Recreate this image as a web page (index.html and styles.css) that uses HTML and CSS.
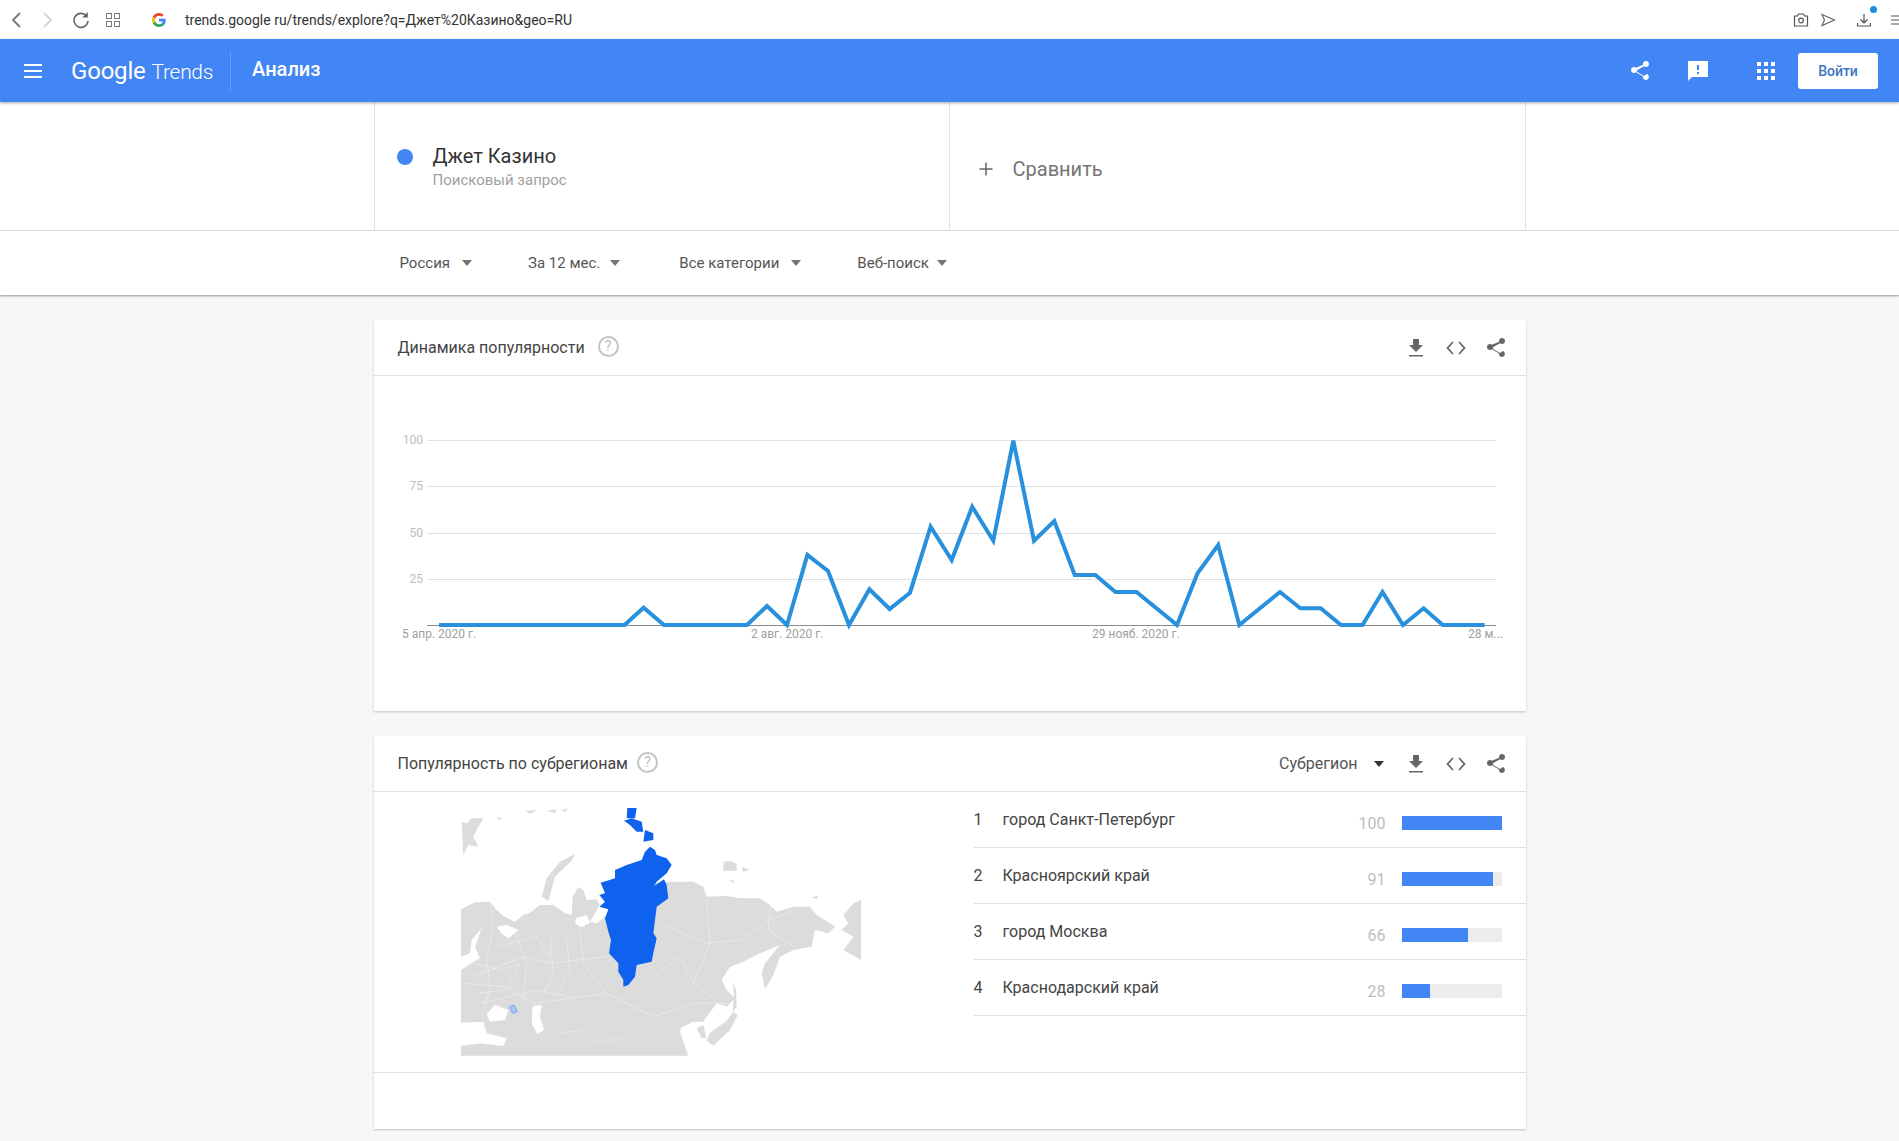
FILE: index.html
```html
<!DOCTYPE html>
<html lang="ru">
<head>
<meta charset="UTF-8">
<title>Google Trends - Анализ</title>
<link rel="stylesheet" href="styles.css">
</head>
<body>

<svg class="icon-defs" width="0" height="0">
    <symbol id="i-share" viewBox="0 0 24 24">
        <path d="M18 16.1c-.8 0-1.4.3-2 .8l-7.100-4.200c.1-.2.1-.5.100-.7s0-.5-.1-.7L16 7.200c.5.500 1.200.8 2 .8 1.700 0 3-1.300 3-3s-1.300-3-3-3-3 1.300-3 3c0 .2 0 .5.100.7L8 8.800C7.500 8.300 6.800 8 6 8c-1.700 0-3 1.300-3 3s1.300 3 3 3c.8 0 1.500-.3 2-.8l7.100 4.200c-.1.200-.1.400-.1.600 0 1.600 1.300 2.900 2.900 2.900s3-1.300 3-2.900-1.300-2.900-2.900-2.900z"/>
    </symbol>
    <symbol id="i-download" viewBox="0 0 24 24">
        <path d="M15 9V3H9v6H5l7 7 7-7zM5 19v1.500h14V19z"/>
    </symbol>
    <symbol id="i-code" viewBox="0 0 24 24">
        <path d="M9 6 3.500 12 9 18M15 6l5.500 6L15 18" fill="none" stroke="currentColor" stroke-width="1.800"/>
    </symbol>
</svg>

<!-- browser toolbar -->
<div class="browser-bar">
    <svg class="nav-icon" width="16" height="20" viewBox="0 0 16 20"><path d="M12 3 5 10l7 7" fill="none" stroke="#777" stroke-width="1.800"/></svg>
    <svg class="nav-icon nav-forward" width="16" height="20" viewBox="0 0 16 20"><path d="m5 3 7 7-7 7" fill="none" stroke="#d4d4d4" stroke-width="1.800"/></svg>
    <svg class="nav-icon nav-reload" width="18" height="18" viewBox="0 0 18 18"><path d="M14.500 5A7 7 0 1 0 16 10" fill="none" stroke="#666" stroke-width="1.600"/><path d="M15.800 1v5.500h-5.500z" fill="#666"/></svg>
    <svg class="nav-icon nav-grid" width="14" height="14" viewBox="0 0 14 14" fill="none" stroke="#777"><rect x=".5" y=".5" width="5" height="5"/><rect x="8.500" y=".5" width="5" height="5"/><rect x=".5" y="8.500" width="5" height="5"/><rect x="8.500" y="8.500" width="5" height="5"/></svg>
    <svg class="nav-favicon" width="14" height="14" viewBox="0 0 48 48">
        <path fill="#ea4335" d="M24 9.500c3.500 0 6.700 1.200 9.200 3.600l6.900-6.900C35.900 2.400 30.500 0 24 0 14.600 0 6.500 5.400 2.600 13.200l8 6.200C12.500 13.700 17.800 9.500 24 9.500z"/>
        <path fill="#4285f4" d="M47 24.500c0-1.600-.1-3.100-.4-4.500H24v9h12.900c-.6 3-2.200 5.500-4.700 7.200l7.700 6c4.500-4.200 7.100-10.300 7.100-17.700z"/>
        <path fill="#fbbc05" d="M10.600 28.600A14.500 14.500 0 0 1 10.600 19.400l-8-6.200A24 24 0 0 0 2.600 34.800z"/>
        <path fill="#34a853" d="M24 48c6.500 0 11.900-2.100 15.900-5.800l-7.700-6c-2.200 1.500-4.900 2.300-8.200 2.300-6.200 0-11.500-4.200-13.400-9.900l-8 6.200C6.500 42.600 14.600 48 24 48z"/>
    </svg>
    <span class="url">trends.google ru/trends/explore?q=Джет%20Казино&amp;geo=RU</span>
    <div class="browser-tools">
        <svg width="16" height="16" viewBox="0 0 16 16" fill="none" stroke="#555" stroke-width="1.200"><path d="M1.500 4h3l1-2h5l1 2h3v10h-13z"/><circle cx="8" cy="8.500" r="2.300"/></svg>
        <svg class="tool-send" width="16" height="16" viewBox="0 0 16 16" fill="none" stroke="#666" stroke-width="1.200"><path d="M2 2.500 14.500 8 2 13.500 4.500 8z"/></svg>
        <div class="tool-download">
            <svg width="16" height="16" viewBox="0 0 16 16" fill="none" stroke="#555" stroke-width="1.200"><path d="M8 2v9M4.500 7.500 8 11l3.500-3.500M1.500 11v3h13v-3"/></svg>
            <span class="tool-badge"></span>
        </div>
        <svg class="tool-menu" width="12" height="14" viewBox="0 0 12 14" stroke="#555" stroke-width="1.200"><path d="M0 3h12M0 7h12M0 11h12"/></svg>
    </div>
</div>

<header class="app-header">
    <svg class="menu-icon" width="18" height="14" viewBox="0 0 18 14" fill="#fff"><path d="M0 0h18v2H0zM0 6h18v2H0zM0 12h18v2H0z"/></svg>
    <div class="logo"><span class="logo-google">Google</span> <span class="logo-trends">Trends</span></div>
    <div class="header-title">Анализ</div>
    <div class="header-actions">
        <svg class="head-share" width="24" height="24"><use href="#i-share"/></svg>
        <svg class="head-feedback" width="24" height="24" viewBox="0 0 24 24"><path d="M22 2H2v20l4-4h16zM13 11h-2V6h2zm0 4h-2v-2h2z" fill-rule="evenodd"/></svg>
        <svg class="head-apps" width="18" height="18" viewBox="0 0 18 18"><path d="M0 0h4v4H0zM7 0h4v4H7zM14 0h4v4h-4zM0 7h4v4H0zM7 7h4v4H7zM14 7h4v4h-4zM0 14h4v4H0zM7 14h4v4H7zM14 14h4v4h-4z"/></svg>
        <button class="login-btn">Войти</button>
    </div>
</header>

<div class="search-row">
    <div class="search-inner">
        <div class="search-cell term">
            <span class="term-dot"></span>
            <div>
                <div class="term-name">Джет Казино</div>
                <div class="term-type">Поисковый запрос</div>
            </div>
        </div>
        <div class="search-cell compare">
            <svg width="16" height="16" viewBox="0 0 16 16" stroke="#666" stroke-width="1.500"><path d="M8 1.500v13M1.500 8h13"/></svg>
            <span>Сравнить</span>
        </div>
    </div>
</div>

<div class="filter-row">
    <div class="filter-inner">
        <div class="filter f-geo">Россия<span class="caret"></span></div>
        <div class="filter f-time">За 12 мес.<span class="caret"></span></div>
        <div class="filter f-cat">Все категории<span class="caret"></span></div>
        <div class="filter f-type">Веб-поиск<span class="caret"></span></div>
    </div>
</div>

<main class="page">
    <section class="card card-chart">
        <div class="card-head">
            <h2>Динамика популярности</h2>
            <span class="help">?</span>
            <div class="card-tools">
                <svg width="24" height="24"><use href="#i-download"/></svg>
                <svg width="24" height="24"><use href="#i-code"/></svg>
                <svg width="24" height="24"><use href="#i-share"/></svg>
            </div>
        </div>
        <svg class="chart" width="1152" height="335" viewBox="374 376 1152 335">
            <g stroke="#e0e0e0">
                <path d="M427 440.500h1069M427 486.500h1069M427 533.500h1069M427 579.500h1069"/>
            </g>
            <path d="M427 625.500h1069" stroke="#8a8a8a"/>
            <g class="axis-y" text-anchor="end">
                <text x="423" y="444">100</text>
                <text x="423" y="490">75</text>
                <text x="423" y="537">50</text>
                <text x="423" y="583">25</text>
            </g>
            <g class="axis-x">
                <text x="402" y="638">5 апр. 2020 г.</text>
                <text x="751" y="638">2 авг. 2020 г.</text>
                <text x="1092" y="638">29 нояб. 2020 г.</text>
                <text x="1468" y="638">28 м...</text>
            </g>
            <polyline class="trend" points="439,625 624.500,625 643.600,607.700 664,625 747,625 767,606 787,625 807.400,555 828,571 849,625 869.400,589.300 889.700,609 910,592.700 930.600,526.700 951.700,560 972.200,506.700 993.300,540.700 1013.300,440.700 1034,540.700 1054.300,521 1074.700,575 1095.400,575 1115.400,592 1136.500,592 1177,625 1197.500,573.300 1218.200,545 1239.300,625 1280,592 1300.400,608.300 1320.700,608.300 1341,625 1362.500,625 1382.500,592 1403,625 1423.600,608.300 1442.800,625 1484.600,625"/>
        </svg>
    </section>

    <section class="card card-geo">
        <div class="card-head">
            <h2>Популярность по субрегионам</h2>
            <span class="help">?</span>
            <div class="card-tools">
                <div class="geo-select">Субрегион<span class="caret dark"></span></div>
                <svg width="24" height="24"><use href="#i-download"/></svg>
                <svg width="24" height="24"><use href="#i-code"/></svg>
                <svg width="24" height="24"><use href="#i-share"/></svg>
            </div>
        </div>
        <div class="geo-body">
            <div class="map-col">
                <svg class="map" width="400" height="248" viewBox="63 54 1200 744">
                    <!-- land -->
                    <g fill="#dcdcdc">
                        <path d="M63 358 105 337 150 335 165 355 190 378 225 395 250 375 270 368 300 345 340 345 375 370 395 375 398 320 415 292 430 300 440 330 470 328 478 345 470 362 450 395 470 400 495 380 640 280 690 275 760 275 790 290 800 320 860 318 900 325 960 325 990 345 1010 365 1060 350 1110 350 1130 375 1170 400 1185 410 1165 430 1125 420 1115 470 1060 480 1020 500 1000 555 975 597 965 550 975 520 1020 465 960 490 900 520 870 530 845 570 860 600 885 625 860 650 830 640 800 680 790 695 760 695 725 712 720 725 745 797H63z"/>
                        <path d="M1263 330 1240 340 1210 375 1225 400 1205 420 1240 440 1210 480 1263 510z"/>
                        <path d="M305 320 320 265 360 215 405 192 395 212 345 260 325 332z"/>
                        <path d="M65 95 80 100 95 85 130 85 115 110 100 140 115 170 85 165 70 195z"/>
                        <path d="M850 215 870 212 890 222 890 242 850 242zM905 230 930 240 910 245zM865 270 885 272 880 280z"/>
                        <path d="M1115 322 1135 318 1130 328z"/>
                        <path d="M255 62 290 60 270 72zM320 62 350 58 345 70zM365 60 385 55 375 66zM170 82 190 85 175 90z"/>
                        <path d="M878 575 888 600 890 650 878 665 882 620z"/>
                    </g>
                    <!-- water cut out of the land -->
                    <g fill="#fff">
                        <path d="M63 500 90 490 95 450 125 415 105 470 120 505 90 522 63 540z"/>
                        <path d="M170 410 200 405 235 420 205 445 185 430z"/>
                        <path d="M140 672 165 645 205 660 195 690 150 695z"/>
                        <path d="M278 648 305 645 300 680 312 720 292 732 275 700z"/>
                        <path d="M63 698 130 695 140 730 200 745 190 768 120 760 63 768z"/>
                        <path d="M408 385 440 375 450 398 425 412 405 400z"/>
                    </g>
                    <g fill="#dcdcdc">
                        <path d="M810 728 860 692 880 665 893 675 870 720 820 767 800 752z"/>
                        <path d="M770 715 790 705 800 745 785 745z"/>
                    </g>
                    <!-- region borders -->
                    <g class="map-borders">
                        <path d="M150 340 160 420 140 500 150 600 130 660"/>
                        <path d="M100 560 250 500 330 520 500 500"/>
                        <path d="M220 410 260 520 250 640"/>
                        <path d="M330 430 340 560 300 620"/>
                        <path d="M420 420 430 520 500 610 640 680 760 640 860 640"/>
                        <path d="M640 560 720 500 760 580 830 630"/>
                        <path d="M660 400 800 460 900 450 990 390 1060 360"/>
                        <path d="M800 330 810 460 760 580"/>
                        <path d="M990 350 985 420 1060 470"/>
                        <path d="M63 580 200 590 280 640 500 610"/>
                        <path d="M360 730 430 720 470 760 560 740"/>
                        <path d="M100 520 180 540 240 520 200 600 110 610"/>
                        <path d="M170 470 290 440 330 500"/>
                        <path d="M120 640 210 620 290 600 390 620"/>
                        <path d="M380 450 390 540 360 600"/>
                    </g>
                    <!-- Krasnoyarsk -->
                    <g fill="#0f62ee">
                        <path d="M630 170 645 180 650 195 680 205 695 225 680 250 650 275 642 288 672 268 680 285 685 325 650 350 645 390 640 430 650 445 640 490 635 515 590 525 585 560 565 585 550 590 550 570 535 545 535 520 507 490 513 450 505 425 495 385 505 358 478 350 495 335 478 315 495 310 482 278 525 265 525 240 560 225 605 210 615 185z"/>
                        <path d="M562 54H590L585 85 560 85z"/>
                        <path d="M552 92 575 85 605 95 610 125 590 125 570 105z"/>
                        <path d="M615 120 640 130 640 150 610 155z"/>
                    </g>
                    <path d="M208 650 222 645 232 665 218 670z" fill="#a9c4f5" stroke="#5b8fee" stroke-width="2"/>
                </svg>
            </div>
            <div class="rank-col">
                <div class="rank-row">
                    <span class="rank-num">1</span>
                    <span class="rank-name">город Санкт-Петербург</span>
                    <span class="rank-val">100</span>
                    <span class="rank-bar"><span class="rank-fill" style="width:100%"></span></span>
                </div>
                <div class="rank-row">
                    <span class="rank-num">2</span>
                    <span class="rank-name">Красноярский край</span>
                    <span class="rank-val">91</span>
                    <span class="rank-bar"><span class="rank-fill" style="width:91%"></span></span>
                </div>
                <div class="rank-row">
                    <span class="rank-num">3</span>
                    <span class="rank-name">город Москва</span>
                    <span class="rank-val">66</span>
                    <span class="rank-bar"><span class="rank-fill" style="width:66%"></span></span>
                </div>
                <div class="rank-row">
                    <span class="rank-num">4</span>
                    <span class="rank-name">Краснодарский край</span>
                    <span class="rank-val">28</span>
                    <span class="rank-bar"><span class="rank-fill" style="width:28%"></span></span>
                </div>
            </div>
        </div>
        <div class="card-foot"></div>
    </section>
</main>

</body>
</html>
```

FILE: styles.css
```css
body, html {
    margin: 0;
    padding: 0;
    font-family: Roboto, "Liberation Sans", sans-serif;
    background-color: #f7f7f7;
    color: #333;
}
.icon-defs {
    display: block;
    height: 0;
}

/* browser toolbar */
.browser-bar {
    height: 39px;
    background: #fff;
    display: flex;
    align-items: center;
    padding-left: 8px;
    padding-right: 0;
    overflow: hidden;
}
.nav-forward {
    margin-left: 15px;
}
.nav-reload {
    margin-left: 17px;
}
.nav-grid {
    margin-left: 16px;
}
.nav-favicon {
    margin-left: 32px;
}
.url {
    margin-left: 19px;
    font-size: 14px;
    color: #333;
}
.browser-tools {
    margin-left: auto;
    display: flex;
    align-items: center;
}
.tool-send {
    margin-left: 11px;
}
.tool-download {
    margin-left: 20px;
    position: relative;
    display: flex;
}
.tool-badge {
    position: absolute;
    top: -6px;
    right: -5px;
    width: 7px;
    height: 7px;
    border-radius: 50%;
    background: #1a8fe8;
}
.tool-menu {
    margin-left: 19px;
    margin-right: -4px;
}

/* blue header */
.app-header {
    height: 63px;
    background: #4285f4;
    display: flex;
    align-items: center;
    color: #fff;
    padding-left: 24px;
    box-shadow: 0 1px 3px rgba(0, 0, 0, 0.35);
    position: relative;
}
.logo {
    margin-left: 29px;
    padding-right: 17px;
    height: 40px;
    line-height: 40px;
    border-right: 1px solid rgba(255, 255, 255, 0.2);
    font-size: 24px;
    white-space: nowrap;
}
.logo-google {
    letter-spacing: -0.2px;
}
.logo-trends {
    font-size: 21px;
    font-weight: 300;
    letter-spacing: -0.3px;
}
.header-title {
    margin-left: 21px;
    font-size: 20px;
    font-weight: 500;
    margin-top: -3px;
}
.header-actions {
    margin-left: auto;
    display: flex;
    align-items: center;
    fill: #fff;
    padding-right: 21px;
}
.head-feedback {
    margin-left: 34px;
}
.head-apps {
    margin-left: 47px;
}
.login-btn {
    margin-left: 23px;
    width: 80px;
    height: 36px;
    border: 0;
    border-radius: 3px;
    background: #fff;
    color: #3a76c4;
    font-family: Roboto, sans-serif;
    font-size: 14px;
    font-weight: 500;
}

/* search term row */
.search-row {
    height: 128px;
    background: #fff;
    border-bottom: 1px solid #e0e0e0;
}
.search-inner {
    width: 1152px;
    height: 100%;
    margin: 0 auto;
    display: flex;
}
.search-cell {
    display: flex;
    align-items: center;
    border-left: 1px solid #e0e0e0;
    box-sizing: border-box;
}
.search-cell.compare {
    flex: 1;
    border-right: 1px solid #e0e0e0;
    color: #757575;
    font-size: 20px;
    padding-left: 28px;
    padding-top: 5px;
    gap: 19px;
}
.term {
    width: 575px;
    padding-left: 22px;
    padding-top: 2px;
}
.term-dot {
    width: 16px;
    height: 16px;
    border-radius: 50%;
    background: #4285f4;
    margin-right: 20px;
    margin-top: -20px;
}
.term-name {
    font-size: 20px;
    line-height: 24px;
    color: #333;
}
.term-type {
    font-size: 15px;
    line-height: 20px;
    margin-top: 2px;
    color: #a0a0a0;
}

/* filters */
.filter-row {
    height: 64px;
    background: #fff;
    box-shadow: 0 1px 2px rgba(0, 0, 0, 0.4);
    position: relative;
}
.filter-inner {
    width: 1152px;
    height: 100%;
    margin: 0 auto;
    display: flex;
    align-items: center;
    padding-left: 26px;
    box-sizing: border-box;
}
.filter {
    font-size: 15px;
    color: #555;
    display: flex;
    align-items: center;
}
.f-time {
    margin-left: 56px;
}
.f-time .caret {
    margin-left: 10px;
}
.f-cat {
    margin-left: 59px;
}
.f-type {
    margin-left: 56px;
}
.f-type .caret {
    margin-left: 8px;
}
.caret {
    width: 0;
    height: 0;
    border-left: 5.500px solid transparent;
    border-right: 5.500px solid transparent;
    border-top: 6px solid #757575;
    margin-left: 12px;
}
.caret.dark {
    border-top-color: #333;
    margin-left: 16px;
}

/* cards */
.page {
    width: 1152px;
    margin: 0 auto;
    padding: 25px 0 13px;
}
.card {
    background: #fff;
    box-shadow: 0 1px 2px rgba(0, 0, 0, 0.22);
}
.card-geo {
    margin-top: 25px;
}
.card-head {
    height: 55px;
    border-bottom: 1px solid #e0e0e0;
    display: flex;
    align-items: center;
    padding: 0 18px 0 24px;
}
.card-head h2 {
    margin: 0;
    font-size: 16px;
    font-weight: 400;
    color: #444;
}
.help {
    width: 17px;
    height: 17px;
    border: 2px solid #c4c4c4;
    border-radius: 50%;
    margin-left: 13px;
    margin-top: -2px;
    color: #bbb;
    font-size: 14px;
    line-height: 17px;
    text-align: center;
}
.card-geo .help {
    margin-left: 9px;
}
.card-tools {
    margin-left: auto;
    display: flex;
    align-items: center;
    gap: 16px;
    fill: #666;
    color: #666;
}
.chart {
    display: block;
}
.axis-y text {
    font-size: 12px;
    fill: #bdbdbd;
}
.axis-x text {
    font-size: 12px;
    fill: #a0a0a0;
}
.trend {
    fill: none;
    stroke: #2890dc;
    stroke-width: 4;
    stroke-linejoin: miter;
}
.geo-select {
    font-size: 16px;
    color: #555;
    display: flex;
    align-items: center;
    margin-right: 4px;
}
.geo-body {
    display: flex;
    height: 280px;
    border-bottom: 1px solid #e0e0e0;
}
.map-col {
    width: 600px;
    padding: 16px 0 0 87px;
    box-sizing: border-box;
}
.map {
    display: block;
}
.map-borders {
    fill: none;
    stroke: #f0f0f0;
    stroke-width: 1.800;
}
.rank-col {
    flex: 1;
}
.rank-row {
    height: 55px;
    border-bottom: 1px solid #e0e0e0;
    display: flex;
    align-items: center;
    padding-right: 24px;
    font-size: 16px;
    color: #444;
}
.rank-num {
    width: 29px;
}
.rank-name {
    flex: 1;
}
.rank-val {
    color: #bdbdbd;
    font-size: 16px;
    margin-top: 7px;
}
.rank-bar {
    width: 100px;
    height: 14px;
    background: #ececec;
    margin-left: 16px;
    margin-top: 7px;
    display: block;
}
.rank-fill {
    display: block;
    height: 100%;
    background: #4285f4;
}
.card-foot {
    height: 56px;
}
```
